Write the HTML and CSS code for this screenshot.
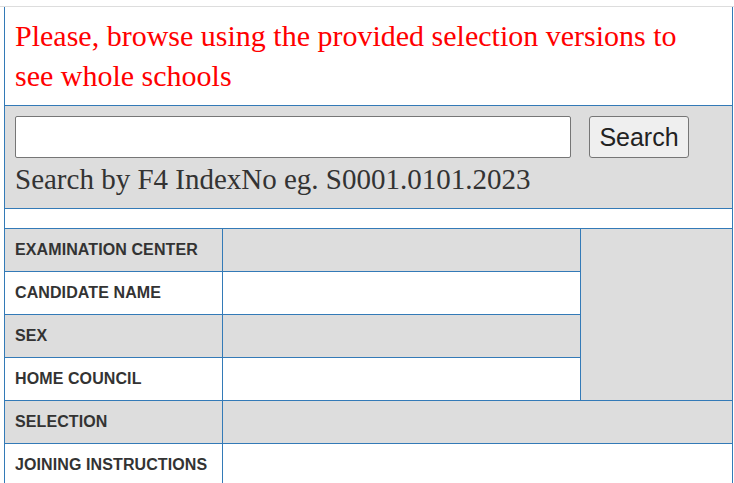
FILE: index.html
```html
<!DOCTYPE html>
<html lang="en">
  <head>
    <meta charset="UTF-8" />
    <meta name="viewport" content="width=device-width, initial-scale=1.0" />
    <title>Form Four Selection</title>
    <link rel="stylesheet" href="styles.css">
  </head>
  <body>
    <div class="topline"></div>
    <div class="notice">
      Please, browse using the provided selection versions to see whole schools
    </div>
    <div class="search">
      <div class="search-row">
        <input type="text" id="indexInput" />
        <button>Search</button>
      </div>
      <div class="hint">Search by F4 IndexNo eg. S0001.0101.2023</div>
    </div>
    <div class="gap"></div>
    <table class="result">
      <tr class="odd">
        <td class="label">EXAMINATION CENTER</td>
        <td class="value"></td>
        <td class="photo" rowspan="4"></td>
      </tr>
      <tr>
        <td class="label">CANDIDATE NAME</td>
        <td class="value"></td>
      </tr>
      <tr class="odd">
        <td class="label">SEX</td>
        <td class="value"></td>
      </tr>
      <tr>
        <td class="label">HOME COUNCIL</td>
        <td class="value"></td>
      </tr>
      <tr class="odd">
        <td class="label">SELECTION</td>
        <td class="value" colspan="2"></td>
      </tr>
      <tr>
        <td class="label">JOINING INSTRUCTIONS</td>
        <td class="value" colspan="2"></td>
      </tr>
    </table>
  </body>
</html>
```

FILE: styles.css
```css
body {
  margin: 0;
  background-color: #fff;
  font-family: "Liberation Serif", serif;
}
.topline {
  margin-top: 6px;
  border-top: 1px solid #ddd; /* 顶部浅灰线 */
}
.notice,
.search,
.gap {
  width: 729px;
  margin-left: 4px;
  box-sizing: border-box;
  border-left: 1px solid #337ab7;
  border-right: 1px solid #337ab7;
}
.notice {
  padding: 9px 10px 9px 10px;
  color: #ff0000;
  font-size: 30px;
  line-height: 40px;
  border-bottom: 1px solid #337ab7;
}
.search {
  background-color: #dddddd;
  padding: 10px 10px 9px 10px;
  border-bottom: 1px solid #337ab7;
}
.search-row {
  display: flex;
  align-items: center;
  gap: 18px;
}
.search-row input {
  width: 556px;
  height: 42px;
  box-sizing: border-box;
  border: 1px solid #767676;
  border-radius: 2px;
  background-color: #fff;
}
.search-row button {
  height: 42px;
  width: 100px;
  font-family: "Liberation Sans", Arial, sans-serif;
  font-size: 25px;
  color: #222;
  background-color: #efefef;
  border: 1px solid #767676;
  border-radius: 3px;
  padding: 0;
}
.hint {
  color: #333;
  font-size: 29px;
  line-height: 40px;
  margin-top: 1px;
}
.gap {
  height: 19px;
}
.result {
  width: 729px;
  margin-left: 4px;
  border-collapse: collapse;
}
.result td {
  border: 1px solid #337ab7;
  padding: 12px 10px;
  height: 18px;
  font-family: "Liberation Sans", Arial, sans-serif;
  font-size: 16px;
  line-height: 18px;
  color: #333;
}
.result .label {
  width: 197px;
  font-weight: bold;
  letter-spacing: 0.1px;
}
.result .value {
  width: 337px;
}
.result .odd td,
.result .photo {
  background-color: #dddddd;
}
```
